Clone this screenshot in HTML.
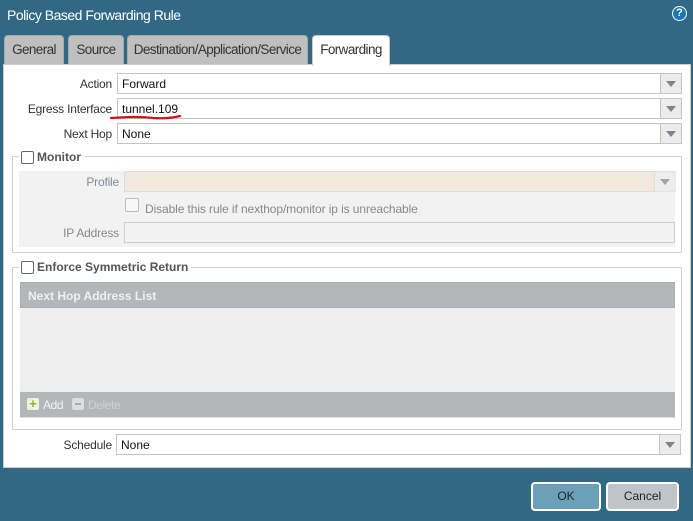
<!DOCTYPE html>
<html><head><style>
*{box-sizing:border-box;margin:0;padding:0}
body{width:693px;height:521px;background:#316985;font-family:"Liberation Sans",sans-serif;font-size:12px;position:relative;overflow:hidden;color:#222}
.a{position:absolute}
.title{left:7px;top:7px;color:#fff;font-size:14px;letter-spacing:-0.5px}
.help{left:672px;top:6px;width:15px;height:15px;border-radius:50%;background:#1e77b5;border:1.5px solid #fff;color:#fff;font-size:11px;font-weight:bold;text-align:center;line-height:12px}
.tab{top:35px;height:30px;background:#bfbfbf;border:1px solid #a8a8a8;border-bottom:none;border-radius:4px 4px 0 0;color:#333;font-size:13.5px;text-align:center;line-height:28px;letter-spacing:-0.6px;white-space:nowrap}
.panel{left:3px;top:64px;width:688px;height:404px;background:#fff;border:1px solid #ccc}
.lbl{text-align:right;color:#333;font-size:12px;letter-spacing:-0.2px}
.inp{height:21px;border:1px solid #c4c4c4;background:#fff;padding-left:4px;line-height:21px;font-size:12px;color:#111}
.dd{width:22px;height:21px;border:1px solid #c4c4c4;background:#ececec}
.dd:after{content:"";position:absolute;left:5px;top:7px;border-left:5px solid transparent;border-right:5px solid transparent;border-top:6px solid #7a8590}
.fs{border:1px solid #d0d0d0}
.leg{background:#fff;padding:0 3px 0 2px;font-weight:bold;color:#555;font-size:12px;display:flex;align-items:center}
.cb{display:inline-block;width:13px;height:13px;border:1px solid #666;border-radius:2px;background:#fff;margin-right:3px}
.btn{top:482px;height:29px;border:2px solid #fff;border-radius:4px;text-align:center;line-height:25px;font-size:12px;color:#222}
</style></head><body>
<div class="a title">Policy Based Forwarding Rule</div>
<div class="a help">?</div>
<div class="a tab" style="left:4px;width:60px">General</div>
<div class="a tab" style="left:68px;width:56px">Source</div>
<div class="a tab" style="left:127px;width:181px">Destination/Application/Service</div>
<div class="a panel"></div>
<div class="a tab" style="left:312px;width:78px;height:31px;background:#fff;border-color:#ccc;z-index:2">Forwarding</div>

<div class="a lbl" style="left:20px;width:92px;top:77px">Action</div>
<div class="a inp" style="left:117px;top:73px;width:544px">Forward</div>
<div class="a dd" style="left:660px;top:73px"></div>
<div class="a lbl" style="left:14px;width:98px;top:102px">Egress Interface</div>
<div class="a inp" style="left:117px;top:98px;width:544px">tunnel.109</div>
<div class="a dd" style="left:660px;top:98px"></div>
<svg class="a" style="left:108px;top:112px" width="75" height="10"><path d="M3 6 Q30 4 45 6 Q60 7 72 4" stroke="#d0141c" stroke-width="2.2" fill="none" stroke-linecap="round"/></svg>
<div class="a lbl" style="left:20px;width:92px;top:127px">Next Hop</div>
<div class="a inp" style="left:117px;top:123px;width:544px">None</div>
<div class="a dd" style="left:660px;top:123px"></div>

<div class="a fs" style="left:12px;top:156px;width:670px;height:97px"></div>
<div class="a leg" style="left:19px;top:150px"><span class="cb"></span>Monitor</div>
<div class="a" style="left:19px;top:171px;width:656px;height:76px;background:#f2f2f2"></div>
<div class="a lbl" style="left:30px;width:89px;top:175px;color:#7d8a99">Profile</div>
<div class="a inp" style="left:124px;top:171px;width:531px;background:#f0e9dc;border-color:#ddd"></div>
<div class="a dd" style="left:654px;top:171px;border-color:#ddd;opacity:.7"></div>
<div class="a" style="left:125px;top:198px;width:14px;height:14px;border:1px solid #bbb;border-radius:2px;background:#f7f7f7"></div>
<div class="a" style="left:145px;top:202px;color:#888;letter-spacing:-0.1px">Disable this rule if nexthop/monitor ip is unreachable</div>
<div class="a lbl" style="left:30px;width:89px;top:226px;color:#888">IP Address</div>
<div class="a inp" style="left:124px;top:222px;width:551px;background:#f2f2f2;border-color:#ccc"></div>

<div class="a fs" style="left:12px;top:267px;width:670px;height:163px"></div>
<div class="a leg" style="left:19px;top:260px"><span class="cb"></span>Enforce Symmetric Return</div>
<div class="a" style="left:20px;top:282px;width:655px;height:26px;background:#b3b7ba;border:1px solid #a8adb0;color:#eef1f3;font-weight:bold;padding-left:7px;line-height:26px">Next Hop Address List</div>
<div class="a" style="left:20px;top:308px;width:655px;height:84px;background:#efefef"></div>
<div class="a" style="left:20px;top:392px;width:655px;height:26px;background:#b3b7ba;border-bottom:1px solid #ddd"></div>
<div class="a" style="left:27px;top:398px;width:12px;height:12px;background:#eef3dc;border-radius:2px;color:#8bb03a;font-weight:bold;font-size:13px;line-height:12px;text-align:center">+</div>
<div class="a" style="left:43px;top:398px;color:#f4f4f4;font-size:12px;letter-spacing:-0.4px">Add</div>
<div class="a" style="left:72px;top:398px;width:12px;height:12px;background:#dedede;border-radius:2px"><div style="margin:5px 3px;height:2px;background:#aaa"></div></div>
<div class="a" style="left:88px;top:398px;color:#cfd2d4;font-size:12px;letter-spacing:-0.4px">Delete</div>

<div class="a lbl" style="left:20px;width:92px;top:438px">Schedule</div>
<div class="a inp" style="left:116px;top:434px;width:544px">None</div>
<div class="a dd" style="left:659px;top:434px"></div>

<div class="a btn" style="left:531px;width:70px;background:#6ca0b8">OK</div>
<div class="a btn" style="left:606px;width:73px;background:#bfc4c8">Cancel</div>
</body></html>
